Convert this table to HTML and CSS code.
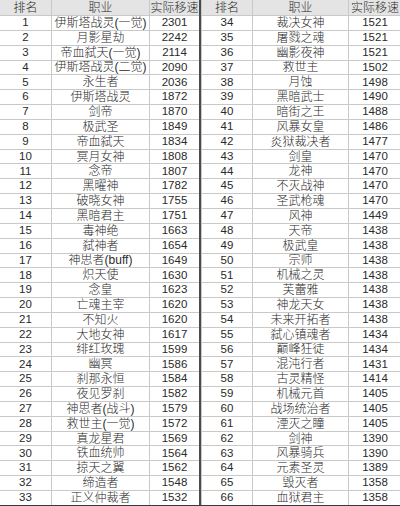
FILE: index.html
```html
<!DOCTYPE html>
<html lang="zh-CN">
<head>
<meta charset="utf-8">
<title>职业实际移速排名</title>
<link rel="stylesheet" href="styles.css">
</head>
<body>
<div class="sheet">
  <div class="half left">
    <div class="cell head">排名</div><div class="cell head">职业</div><div class="cell head">实际移速</div>
    <div class="cell">1</div><div class="cell">伊斯塔战灵(一觉)</div><div class="cell">2301</div>
    <div class="cell">2</div><div class="cell">月影星劫</div><div class="cell">2242</div>
    <div class="cell">3</div><div class="cell">帝血弑天(一觉)</div><div class="cell">2114</div>
    <div class="cell">4</div><div class="cell">伊斯塔战灵(二觉)</div><div class="cell">2090</div>
    <div class="cell">5</div><div class="cell">永生者</div><div class="cell">2036</div>
    <div class="cell">6</div><div class="cell">伊斯塔战灵</div><div class="cell">1872</div>
    <div class="cell">7</div><div class="cell">剑帝</div><div class="cell">1870</div>
    <div class="cell">8</div><div class="cell">极武圣</div><div class="cell">1849</div>
    <div class="cell">9</div><div class="cell">帝血弑天</div><div class="cell">1834</div>
    <div class="cell">10</div><div class="cell">冥月女神</div><div class="cell">1808</div>
    <div class="cell">11</div><div class="cell">念帝</div><div class="cell">1807</div>
    <div class="cell">12</div><div class="cell">黑曜神</div><div class="cell">1782</div>
    <div class="cell">13</div><div class="cell">破晓女神</div><div class="cell">1755</div>
    <div class="cell">14</div><div class="cell">黑暗君主</div><div class="cell">1751</div>
    <div class="cell">15</div><div class="cell">毒神绝</div><div class="cell">1663</div>
    <div class="cell">16</div><div class="cell">弑神者</div><div class="cell">1654</div>
    <div class="cell">17</div><div class="cell">神思者(buff)</div><div class="cell">1649</div>
    <div class="cell">18</div><div class="cell">炽天使</div><div class="cell">1630</div>
    <div class="cell">19</div><div class="cell">念皇</div><div class="cell">1623</div>
    <div class="cell">20</div><div class="cell">亡魂主宰</div><div class="cell">1620</div>
    <div class="cell">21</div><div class="cell">不知火</div><div class="cell">1620</div>
    <div class="cell">22</div><div class="cell">大地女神</div><div class="cell">1617</div>
    <div class="cell">23</div><div class="cell">绯红玫瑰</div><div class="cell">1599</div>
    <div class="cell">24</div><div class="cell">幽冥</div><div class="cell">1586</div>
    <div class="cell">25</div><div class="cell">刹那永恒</div><div class="cell">1584</div>
    <div class="cell">26</div><div class="cell">夜见罗刹</div><div class="cell">1582</div>
    <div class="cell">27</div><div class="cell">神思者(战斗)</div><div class="cell">1579</div>
    <div class="cell">28</div><div class="cell">救世主(一觉)</div><div class="cell">1572</div>
    <div class="cell">29</div><div class="cell">真龙星君</div><div class="cell">1569</div>
    <div class="cell">30</div><div class="cell">铁血统帅</div><div class="cell">1564</div>
    <div class="cell">31</div><div class="cell">掠天之翼</div><div class="cell">1562</div>
    <div class="cell">32</div><div class="cell">缔造者</div><div class="cell">1548</div>
    <div class="cell">33</div><div class="cell">正义仲裁者</div><div class="cell">1532</div>
  </div>
  <div class="divider"></div>
  <div class="half right">
    <div class="cell head">排名</div><div class="cell head">职业</div><div class="cell head">实际移速</div>
    <div class="cell">34</div><div class="cell">裁决女神</div><div class="cell">1521</div>
    <div class="cell">35</div><div class="cell">屠戮之魂</div><div class="cell">1521</div>
    <div class="cell">36</div><div class="cell">幽影夜神</div><div class="cell">1521</div>
    <div class="cell">37</div><div class="cell">救世主</div><div class="cell">1502</div>
    <div class="cell">38</div><div class="cell">月蚀</div><div class="cell">1498</div>
    <div class="cell">39</div><div class="cell">黑暗武士</div><div class="cell">1490</div>
    <div class="cell">40</div><div class="cell">暗街之王</div><div class="cell">1488</div>
    <div class="cell">41</div><div class="cell">风暴女皇</div><div class="cell">1486</div>
    <div class="cell">42</div><div class="cell">炎狱裁决者</div><div class="cell">1477</div>
    <div class="cell">43</div><div class="cell">剑皇</div><div class="cell">1470</div>
    <div class="cell">44</div><div class="cell">龙神</div><div class="cell">1470</div>
    <div class="cell">45</div><div class="cell">不灭战神</div><div class="cell">1470</div>
    <div class="cell">46</div><div class="cell">圣武枪魂</div><div class="cell">1470</div>
    <div class="cell">47</div><div class="cell">风神</div><div class="cell">1449</div>
    <div class="cell">48</div><div class="cell">天帝</div><div class="cell">1438</div>
    <div class="cell">49</div><div class="cell">极武皇</div><div class="cell">1438</div>
    <div class="cell">50</div><div class="cell">宗师</div><div class="cell">1438</div>
    <div class="cell">51</div><div class="cell">机械之灵</div><div class="cell">1438</div>
    <div class="cell">52</div><div class="cell">芙蕾雅</div><div class="cell">1438</div>
    <div class="cell">53</div><div class="cell">神龙天女</div><div class="cell">1438</div>
    <div class="cell">54</div><div class="cell">未来开拓者</div><div class="cell">1438</div>
    <div class="cell">55</div><div class="cell">弑心镇魂者</div><div class="cell">1434</div>
    <div class="cell">56</div><div class="cell">巅峰狂徒</div><div class="cell">1434</div>
    <div class="cell">57</div><div class="cell">混沌行者</div><div class="cell">1431</div>
    <div class="cell">58</div><div class="cell">古灵精怪</div><div class="cell">1414</div>
    <div class="cell">59</div><div class="cell">机械元首</div><div class="cell">1405</div>
    <div class="cell">60</div><div class="cell">战场统治者</div><div class="cell">1405</div>
    <div class="cell">61</div><div class="cell">湮灭之瞳</div><div class="cell">1405</div>
    <div class="cell">62</div><div class="cell">剑神</div><div class="cell">1390</div>
    <div class="cell">63</div><div class="cell">风暴骑兵</div><div class="cell">1390</div>
    <div class="cell">64</div><div class="cell">元素圣灵</div><div class="cell">1389</div>
    <div class="cell">65</div><div class="cell">毁灭者</div><div class="cell">1358</div>
    <div class="cell">66</div><div class="cell">血狱君主</div><div class="cell">1358</div>
  </div>
</div>
</body>
</html>
```
FILE: styles.css
```css
html, body {
  margin: 0;
  padding: 0;
  background: #ffffff;
}

.sheet {
  display: flex;
  width: 400px;
  height: 506px;
  border-bottom: 1px solid #3a3a3a;
  box-sizing: border-box;
  font-family: "Liberation Sans", "Noto Sans CJK SC", sans-serif;
  color: #2a2a2a;
}

.half {
  display: grid;
  grid-template-rows: 15px repeat(33, 13.85px);
  row-gap: 1px;
  column-gap: 1px;
  background: #c9c9c9;
  width: 199px;
  height: 505px;
}

.left {
  grid-template-columns: 51px 97px 49px;
  padding-right: 1px;
  box-sizing: border-box;
}

.right {
  grid-template-columns: 50px 95px 52px;
  padding-left: 1px;
  box-sizing: border-box;
}

.divider {
  width: 2px;
  background: #4a4a4a;
}

.cell {
  background: #ffffff;
  display: flex;
  align-items: center;
  justify-content: center;
  font-size: 12px;
  font-weight: 300;
  line-height: 1;
  white-space: nowrap;
  overflow: hidden;
}

.cell:nth-child(3n+1),
.cell:nth-child(3n) {
  font-size: 11.5px;
  font-weight: 400;
}

.cell.head {
  background: #e4e4e4;
  font-size: 12px;
  font-weight: 300;
}
```
